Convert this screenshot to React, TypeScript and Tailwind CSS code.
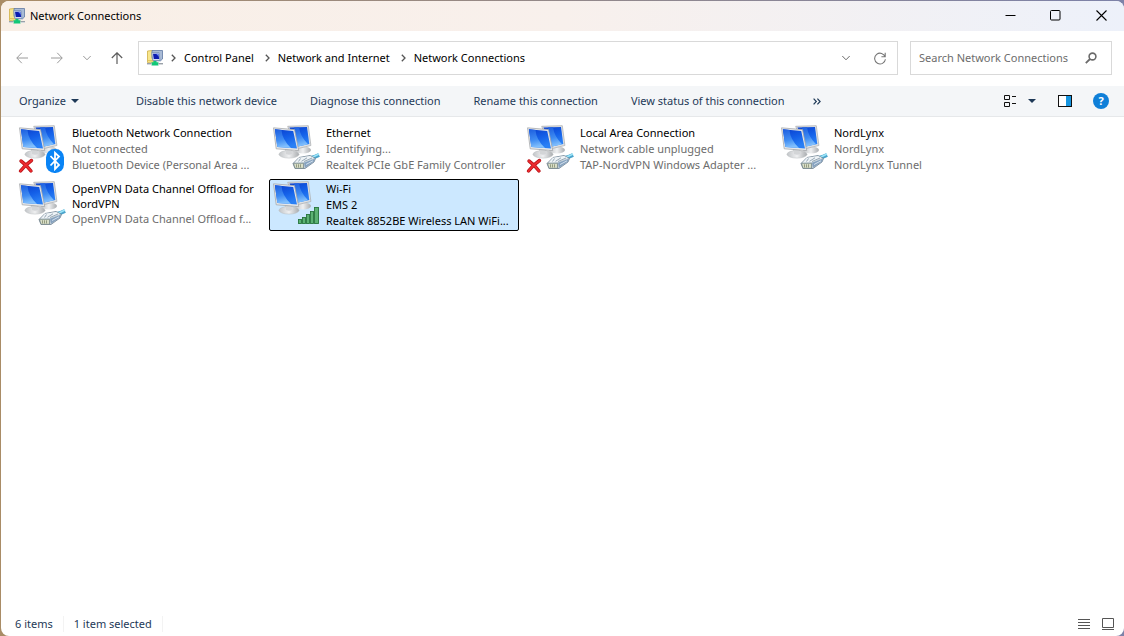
import type React from "react";

type Badge = "bluetooth" | "cable" | "signal";

interface Connection {
  name: string;
  status: string;
  device: string;
  badge: Badge;
  disabled?: boolean;
  selected?: boolean;
}

const connections: Connection[] = [
  {
    name: "Bluetooth Network Connection",
    status: "Not connected",
    device: "Bluetooth Device (Personal Area ...",
    badge: "bluetooth",
    disabled: true,
  },
  {
    name: "Ethernet",
    status: "Identifying...",
    device: "Realtek PCIe GbE Family Controller",
    badge: "cable",
  },
  {
    name: "Local Area Connection",
    status: "Network cable unplugged",
    device: "TAP-NordVPN Windows Adapter ...",
    badge: "cable",
    disabled: true,
  },
  { name: "NordLynx", status: "NordLynx", device: "NordLynx Tunnel", badge: "cable" },
  {
    name: "OpenVPN Data Channel Offload for NordVPN",
    status: "",
    device: "OpenVPN Data Channel Offload f...",
    badge: "cable",
  },
  {
    name: "Wi-Fi",
    status: "EMS 2",
    device: "Realtek 8852BE Wireless LAN WiFi...",
    badge: "signal",
    selected: true,
  },
];

const crumbs = ["Control Panel", "Network and Internet", "Network Connections"];

const commands = [
  "Disable this network device",
  "Diagnose this connection",
  "Rename this connection",
  "View status of this connection",
];

function NetworkFolderIcon() {
  return (
    <svg width="16" height="16" viewBox="0 0 16 16" className="shrink-0" aria-hidden="true">
      <path d="M0.5 1 5 0.5 7 1.5V12L0.5 12.5Z" fill="#f8e68c" stroke="#cfae45" strokeWidth="0.8" />
      <path d="M1 10.5H6" stroke="#e3c65f" />
      <path d="M5 0.5H15.5V9L13.5 10.8H8L5 8.5Z" fill="#a9bbd6" stroke="#6079a3" strokeWidth="0.8" />
      <path d="M4.8 2.5H12L13 10.5H5.8Z" fill="#d3deee" stroke="#7088b0" strokeWidth="0.7" />
      <path d="M6 3.7H11.4L12.2 9H6.8Z" fill="#0c1cb0" />
      <path d="M9 3.7H11.4L11.8 6.5Z" fill="#6d8df5" />
      <path d="M6.5 11H9.5V12.3H11.5V15.5H4.5V12.3H6.5Z" fill="#12c878" />
      <path d="M0 13.5H4.5M11.5 13.5H16" stroke="#9aa1a8" />
      <path d="M0 14.5H4.5M11.5 14.5H16" stroke="#d4d8db" />
    </svg>
  );
}

function BluetoothBadge() {
  return (
    <g>
      <rect x="28" y="25" width="18" height="24" rx="8.5" fill="#0a84f5" />
      <path
        d="M32.5 32 41 41 37 45V28.8L41 32.5 32.5 41.5"
        fill="none"
        stroke="#fff"
        strokeWidth="1.8"
      />
    </g>
  );
}

function CableBadge() {
  return (
    <g strokeLinejoin="round">
      <path d="M37 34.5Q41 34 47 31" fill="none" stroke="#4aa3cb" strokeWidth="4" />
      <path d="M38 33.5Q42 33 47 30" fill="none" stroke="#9be4f8" strokeWidth="1.5" />
      <path d="M27 33.5 38 31.5 43.5 34.5 42 38 33 44.5H23L21 39.5Z" fill="#c3cfd8" stroke="#6f8292" strokeWidth="0.8" />
      <path d="M27 33.8 38 32 42 34 32 38 22.5 38.7Z" fill="#eef3f6" />
      <path d="M32 38.7 43 34.8 41.8 37.8 33 43.8Z" fill="#86a2bf" />
      <path d="M34 40.5 41 36.8" stroke="#dce8f2" strokeWidth="0.9" />
      <path d="M21.5 39.3H31.5V44.3H23Z" fill="#dadfc8" stroke="#6f7f84" strokeWidth="0.7" />
      <path d="M24.5 40.3V43.5M26.5 40.3V43.5M28.5 40.3V43.5" stroke="#8c9478" strokeWidth="0.9" />
      <path d="M26.5 37.5 28.5 34.5M29.5 37.3 35 33.8M32 37.5 40 34" stroke="#71869a" strokeWidth="0.7" />
    </g>
  );
}

function SignalBadge() {
  return (
    <g fill="#5cb274" stroke="#27743c" strokeWidth="0.9">
      <rect x="26.5" y="39.5" width="3" height="4" />
      <rect x="30.5" y="37.5" width="3" height="6" />
      <rect x="34.5" y="34.5" width="3" height="9" />
      <rect x="38.5" y="31.5" width="3" height="12" />
      <rect x="42.5" y="27.5" width="4" height="16" />
    </g>
  );
}

function ConnectionIcon({ badge, disabled }: { badge: Badge; disabled?: boolean }) {
  return (
    <svg width="48" height="50" viewBox="0 0 48 50" className="shrink-0" aria-hidden="true">
      <defs>
        <linearGradient id="screen" x1="0" y1="0" x2="0.4" y2="1">
          <stop offset="0" stopColor="#0a3fcd" />
          <stop offset="0.55" stopColor="#1460e8" />
          <stop offset="1" stopColor="#2a80f5" />
        </linearGradient>
        <linearGradient id="glare" x1="0" y1="0" x2="0.2" y2="1">
          <stop offset="0" stopColor="#1d5edf" />
          <stop offset="0.6" stopColor="#3f8cf2" />
          <stop offset="1" stopColor="#82c0fd" />
        </linearGradient>
        <linearGradient id="stand" x1="0" y1="0" x2="1" y2="0">
          <stop offset="0" stopColor="#c2c5c8" />
          <stop offset="0.5" stopColor="#eff0f1" />
          <stop offset="1" stopColor="#a9acaf" />
        </linearGradient>
      </defs>
      {/* back monitor */}
      <ellipse cx="31" cy="26" rx="8" ry="3.5" fill="url(#stand)" />
      <path d="M15.7 2.3 36.3 1.7 38.9 21.5 24 25Z" fill="#dfe1e3" stroke="#a7aaad" strokeWidth="0.7" />
      <path d="M17.4 3.6 35 3 37.3 20 25 22.8Z" fill="url(#screen)" />
      <path d="M22 3.5 27 3.3Q28 12 36 20.3L25 22.8Z" fill="url(#glare)" />
      {/* front monitor */}
      <path d="M13 25H20L20.5 29H13.5Z" fill="#b9bcbf" />
      <ellipse cx="17" cy="30.3" rx="10" ry="3.8" fill="url(#stand)" stroke="#b9bcbf" strokeWidth="0.5" />
      <path d="M13.5 26H19.5L20 30Q17 31.5 14 30Z" fill="#d3d5d7" />
      <path d="M1.5 3.8 22.5 5.6 26.7 26.6 4.2 24.8Z" fill="#e6e8ea" stroke="#9da0a4" strokeWidth="0.7" />
      <path d="M2.9 5.3 21.2 6.9 25 24.6 5.3 23Z" fill="url(#screen)" />
      <path d="M2.9 5.3 9.5 5.9Q10 15 19 24.1L5.3 23Z" fill="url(#glare)" />
      {badge === "bluetooth" && <BluetoothBadge />}
      {badge === "cable" && <CableBadge />}
      {badge === "signal" && <SignalBadge />}
      {disabled && (
        <g fill="none" strokeLinecap="round">
          <path d="M3 37Q8 40.5 13 47M13.5 36.5Q7 41 2.5 47" stroke="#b5151a" strokeWidth="3.4" />
          <path d="M3 37Q8 40.5 13 47M13.5 36.5Q7 41 2.5 47" stroke="#ee2b2f" strokeWidth="2" />
        </g>
      )}
    </svg>
  );
}

function ConnectionItem({ connection }: { connection: Connection }) {
  const { name, status, device, badge, disabled, selected } = connection;

  return (
    <li>
      <button
        type="button"
        aria-pressed={selected ?? false}
        className={`flex h-[52px] w-full items-start rounded-xs border pl-0.5 text-left leading-4 whitespace-nowrap ${
          selected ? "border-black bg-[#cce8ff] text-black" : "border-transparent text-[#6d6d6d]"
        }`}
      >
        <ConnectionIcon badge={badge} disabled={disabled} />
        <span className="flex min-w-0 flex-1 flex-col pt-px pl-1.5">
          <span className={`text-black ${status ? "" : "leading-[15px] whitespace-normal"}`}>{name}</span>
          {status && <span>{status}</span>}
          <span>{device}</span>
        </span>
      </button>
    </li>
  );
}

function IconButton({ label, className, children }: { label: string; className?: string; children: React.ReactNode }) {
  return (
    <button type="button" aria-label={label} className={`flex shrink-0 items-center justify-center ${className ?? ""}`}>
      {children}
    </button>
  );
}

function TitleBar() {
  return (
    <header className="flex h-[30px] items-center bg-linear-to-r from-[#f9efe6] via-[#f8f0ec] to-[#edf1fa] pb-px pl-2">
      <NetworkFolderIcon />
      <h1 className="ml-[5px] flex-1 text-black">Network Connections</h1>
      <IconButton label="Minimize" className="h-full w-[45px]">
        <svg width="11" height="11" viewBox="0 0 11 11" stroke="#000">
          <path d="M0.5 5.5H10.5" />
        </svg>
      </IconButton>
      <IconButton label="Maximize" className="h-full w-[45px]">
        <svg width="11" height="11" viewBox="0 0 11 11" fill="none" stroke="#000">
          <rect x="0.5" y="0.5" width="9.5" height="9.5" rx="1" />
        </svg>
      </IconButton>
      <IconButton label="Close" className="h-full w-[46px]">
        <svg width="11" height="11" viewBox="0 0 11 11" stroke="#000" strokeWidth="1.1">
          <path d="M0.5 0.5 10.5 10.5M10.5 0.5 0.5 10.5" />
        </svg>
      </IconButton>
    </header>
  );
}

function AddressRow() {
  return (
    <div className="flex h-[55px] items-center pr-3 pb-px pl-[15px]">
      <nav aria-label="History" className="flex items-center">
        <IconButton label="Back" className="w-3">
          <svg width="12" height="12" viewBox="0 0 12 12" fill="none" stroke="#9a9a9a" className="shrink-0">
            <path d="M12 6H0.8M5.8 0.8 0.8 6 5.8 11.2" />
          </svg>
        </IconButton>
        <IconButton label="Forward" className="ml-[23px] w-3">
          <svg width="12" height="12" viewBox="0 0 12 12" fill="none" stroke="#9a9a9a" className="shrink-0">
            <path d="M0 6H11.2M6.2 0.8 11.2 6 6.2 11.2" />
          </svg>
        </IconButton>
        <IconButton label="Recent locations" className="ml-5 w-2">
          <svg width="8" height="6" viewBox="0 0 8 6" fill="none" stroke="#9a9a9a" className="shrink-0">
            <path d="M0.3 1 4 4.8 7.7 1" />
          </svg>
        </IconButton>
        <IconButton label="Up" className="ml-5 w-3">
          <svg width="12" height="12" viewBox="0 0 12 12" fill="none" stroke="#5c5c5c" strokeWidth="1.2" className="shrink-0">
            <path d="M6 12V0.8M0.8 6 6 0.8 11.2 6" />
          </svg>
        </IconButton>
      </nav>

      <div className="ml-[15px] flex h-[34px] flex-1 items-center border border-[#d9d9d9] pr-[11px] pl-2">
        <NetworkFolderIcon />
        <ol className="flex flex-1 items-center text-black">
          {crumbs.map((crumb) => (
            <li key={crumb} className="flex items-center">
              <svg width="5" height="8" viewBox="0 0 5 8" fill="none" stroke="#555" strokeWidth="1.3" className="mx-2">
                <path d="M0.8 0.8 4 4 0.8 7.2" />
              </svg>
              <a href="#" className="pr-[3px]">
                {crumb}
              </a>
            </li>
          ))}
        </ol>
        <IconButton label="Previous locations" className="mr-6">
          <svg width="8" height="6" viewBox="0 0 8 6" fill="none" stroke="#6b6b6b">
            <path d="M0.3 1 4 4.8 7.7 1" />
          </svg>
        </IconButton>
        <IconButton label="Refresh">
          <svg width="12" height="13" viewBox="0 0 12 13" fill="none" stroke="#777" strokeWidth="1.1">
            <path d="M11.2 5A5.4 5.4 0 1 0 11.4 7.2M11.2 0.8V4.8H7.4" />
          </svg>
        </IconButton>
      </div>

      <label className="ml-3 flex h-[34px] w-[202px] items-center border border-[#d9d9d9] pr-3.5 pl-2">
        <input
          type="search"
          aria-label="Search Network Connections"
          placeholder="Search Network Connections"
          className="min-w-0 flex-1 outline-none placeholder:text-[#6d6d6d]"
        />
        <svg width="12" height="12" viewBox="0 0 12 12" fill="none" stroke="#6b6b6b" className="shrink-0">
          <circle cx="7.5" cy="4.5" r="3.4" strokeWidth="1.6" />
          <path d="M5 7 0.8 11.2" strokeWidth="1.8" />
        </svg>
      </label>
    </div>
  );
}

function CommandBar() {
  return (
    <div
      role="toolbar"
      aria-label="Commands"
      className="flex h-[31px] items-center border-b border-[#e6e8ea] bg-[#f4f6f8] pr-[15px] pl-[18px] whitespace-nowrap text-[#1e3957]"
    >
      <button type="button" className="mr-[57px] flex items-center gap-[5px]">
        Organize
        <svg width="8" height="4" viewBox="0 0 8 4" fill="#1e3957" aria-hidden="true">
          <path d="M0 0H8L4 4Z" />
        </svg>
      </button>
      <div className="flex flex-1 items-center gap-[33px]">
        {commands.map((command) => (
          <button key={command} type="button">
            {command}
          </button>
        ))}
        <IconButton label="More commands" className="-ml-1">
          <svg width="8" height="7" viewBox="0 0 8 7" fill="none" stroke="#1e3957" strokeWidth="1.2">
            <path d="M0.6 0.6 3.3 3.5 0.6 6.4M4.4 0.6 7.1 3.5 4.4 6.4" />
          </svg>
        </IconButton>
      </div>
      <IconButton label="Change your view">
        <svg width="13" height="12" viewBox="0 0 13 12" fill="none" stroke="#111">
          <path d="M0.5 0.5H5.5V4.5H0.5ZM0.5 7.5H5.5V11.5H0.5ZM8 1.5H12M8 8.5H12" />
        </svg>
      </IconButton>
      <IconButton label="More options" className="ml-[11px]">
        <svg width="8" height="4" viewBox="0 0 8 4" fill="#1e3957">
          <path d="M0 0H8L4 4Z" />
        </svg>
      </IconButton>
      <IconButton label="Show the preview pane" className="ml-[22px]">
        <svg width="14" height="12" viewBox="0 0 14 12" fill="none">
          <rect x="0.5" y="0.5" width="13" height="11" fill="#fff" stroke="#111" />
          <rect x="8" y="1" width="5" height="10" fill="#1695e0" />
        </svg>
      </IconButton>
      <IconButton label="Get help" className="ml-[21px] size-4 rounded-full bg-[#0f7fd8] leading-4 font-bold text-white">
        ?
      </IconButton>
    </div>
  );
}

function StatusBar() {
  return (
    <footer className="flex h-6 items-center pr-2.5 pl-3.5 text-[#1e3957]">
      <span className="border-r border-[#f3f3f3] pr-2.5">6 items</span>
      <span className="border-r border-[#f3f3f3] px-2.5">1 item selected</span>
      <div className="ml-auto flex items-center gap-3">
        <IconButton label="Details view">
          <svg width="12" height="10" viewBox="0 0 12 10" stroke="#555">
            <path d="M0 0.5H12M0 3.5H12M0 6.5H12M0 9.5H12" />
          </svg>
        </IconButton>
        <IconButton label="Large icons view">
          <svg width="12" height="12" viewBox="0 0 12 12" fill="none" stroke="#555">
            <path d="M0.5 0.5H11.5V9.5H0.5ZM0 11.5H12" />
          </svg>
        </IconButton>
      </div>
    </footer>
  );
}

export default function App() {
  return (
    <div className="flex min-h-screen flex-col bg-linear-to-r from-[#a98c66] to-[#7d82a8] pt-px pl-px font-['Noto_Sans','Open_Sans',sans-serif] text-[11px] leading-4">
      <div className="flex flex-1 flex-col overflow-hidden rounded-lg bg-white">
        <TitleBar />
        <AddressRow />
        <CommandBar />
        <main className="flex-1 pt-1.5 pl-3.5">
          <ul className="grid grid-cols-[repeat(auto-fill,250px)] gap-1">
            {connections.map((connection) => (
              <ConnectionItem key={connection.name} connection={connection} />
            ))}
          </ul>
        </main>
        <StatusBar />
      </div>
    </div>
  );
}
